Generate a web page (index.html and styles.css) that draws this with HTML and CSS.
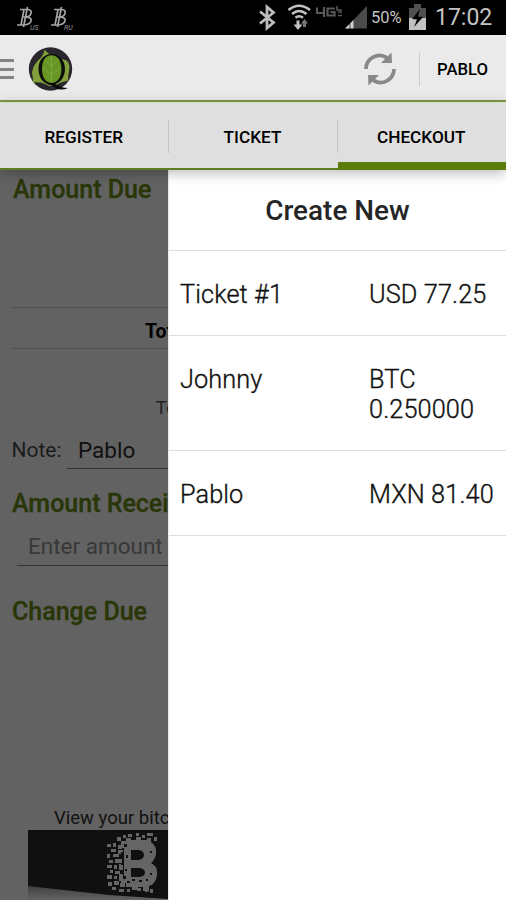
FILE: index.html
```html
<!DOCTYPE html>
<html lang="en">
<head>
<meta charset="utf-8">
<title>Checkout</title>
<link rel="stylesheet" href="styles.css">
</head>
<body>
<div class="screen">
  <header class="status">
    <svg class="coins" width="80" height="35" viewBox="0 0 80 35" fill="none" stroke="#a5a5a5" stroke-width="1.700">
      <g id="coin"><path d="M20 9.500h8q4 .5 3 4t-6 3.500h-2m3 0q6 .5 5 4t-7 4h-7M24 9.500l-3 15.500M27.500 7l-4 20"/></g>
      <use href="#coin" x="34"/>
      <g class="coin-label"><text x="30" y="29.500">US</text><text x="64" y="29.500">RU</text></g>
    </svg>
    <div class="status-right">
      <svg width="112" height="35" viewBox="256 0 112 35">
        <path d="M260 11.500l13.500 11-6.500 5.500V7l6.500 5.500-13.500 11" fill="none" stroke="#bdbdbd" stroke-width="2.800"/>
        <g fill="none" stroke="#c2c2c2" stroke-width="2.500"><path d="M288.500 10q10.500-8.500 21.500 0M292 14q7-6 14.500 0M295.500 17.800q3.500-3 7.500 0"/></g>
        <path d="M296.500 20.500v4h-3l4.500 5.500 4.500-5.500h-3v-4z" fill="#c2c2c2"/><path d="M303 27v-3.500h-2l3.500-4.500 3.500 4.500h-2V27z" fill="#777"/>
        <g fill="none" stroke="#585858" stroke-width="2.200"><path d="M317 7.500V13h7M324 7v10M335 8.500h-7.500V15.500h7V12h-4"/><path d="M337 6v4h5M342 12h-4M342 15.500h-4" stroke-width="1.500"/></g>
        <path d="M345 28.500L367 6v22.500z" fill="#4b4b4b"/><path d="M345 28.500l4.500-4.500v4.500zM350.500 23l3-3v8.500h-3z" fill="#d0d0d0"/>
      </svg>
      <span class="percent">50%</span>
      <svg width="18" height="35" viewBox="0 0 18 35"><path d="M0 8h5V4h7v4h5v11H0z" fill="#505050"/><path d="M0 18h17v12H0z" fill="#c2c2c2"/><path d="M11 9L3 19l5 .5-3 7.500 9-10-5-.5z" fill="#000"/></svg>
      <time class="clock">17:02</time>
    </div>
  </header>
  <nav class="appbar">
    <div class="menu"><i></i><i></i><i></i></div>
    <svg class="logo" width="46" height="46" viewBox="0 0 46 46">
      <circle cx="23.500" cy="23" r="21.700" fill="#29262e"/>
      <path d="M17.500 3.500q4 5 10 7 6 2 12 4 4 3 2.500 11-1 5-1 9-8 2-11 4-6 3-11 0-5-3-13-2 0-5-1-10 1-7 6-12 6-5 6.500-11z" fill="#84a03a"/>
      <ellipse cx="24.500" cy="23" rx="11.500" ry="14.500" fill="#689525"/>
      <path d="M24.500 9v28M24.500 20l-7-6M24.500 20l7-7M24.500 29l-8-7M24.500 29l8-7" stroke="#7dab37" fill="none"/>
      <path fill="#0b0e0a" fill-rule="evenodd" d="M24.500 8C33 8 38 15 38 23s-5 15.500-13.500 15.500S11.500 31 11.500 23 16 8 24.500 8zM24.500 9.300C18 9.300 15 15.500 15 23s3 14 9.500 14S34.500 30.500 34.500 23 31 9.300 24.500 9.300z"/>
      <path d="M20 37q6-1 10 2 4 3 11 3-7 3-12 0-4-3-9-4z" fill="#08080a"/>
    </svg>
    <svg class="refresh" width="34" height="34" viewBox="0 0 34 34"><g id="arc"><path d="M3 17A13.500 13.500 0 0 1 24 5.800" fill="none" stroke="#898989" stroke-width="3.800"/><path d="M28.500 .5l.5 10.500H18z" fill="#898989"/></g><use href="#arc" transform="rotate(180 17 17)"/></svg>
    <span class="user">PABLO</span>
  </nav>
  <nav class="tabs"><a>REGISTER</a><a>TICKET</a><a class="active">CHECKOUT</a></nav>
  <main class="content">
    <section class="checkout">
      <h2 class="due">Amount Due</h2>
      <div class="total">Tot</div>
      <div class="tendered">To</div>
      <div class="note"><span>Note:</span><div class="field">Pablo</div></div>
      <h2 class="received">Amount Recei</h2>
      <div class="field amount">Enter amount</div>
      <h2 class="change">Change Due</h2>
      <p class="view">View your bitc</p>
      <svg class="banner" width="141" height="70" viewBox="28 830 141 70">
        <defs><linearGradient id="shade" x2="0" y2="1"><stop stop-color="#3c3c3c"/><stop offset="1" stop-color="#626262"/></linearGradient></defs>
        <path d="M28 884h141v16H28z" fill="url(#shade)"/>
        <path d="M28 830h141v69l-60-4-81-9z" fill="#101010"/>
        <g fill="#656565">
          <path fill-rule="evenodd" d="M121 841h5v-3h5v2h5v-3h5v3h6v-2h4v4q6 4 5 12-1 6-5 9 7 3 6 12-1 9-8 11v5h-6v-4h-5v3h-6v-3h-6v-4h-5v-4h3v-31h-3zM131 850v10h8q5-1 5-5t-5-5zM131 868v9h9q5-1 5-4.500t-5-4.500z"/>
          <path d="M107 844h4v3h-4zM113 843h3v4h-3zM118 845h4v4h-4zM111 849h5v3h-5zM107 854h3v4h-3zM113 854h6v3h-6zM118 850h5v4h-5zM109 860h4v3h-4zM115 859h7v4h-7zM107 865h5v3h-5zM114 865h3v4h-3zM119 864h4v6h-4zM110 870h3v3h-3zM115 871h5v3h-5zM107 875h5v4h-5zM114 876h3v3h-3zM119 874h4v7h-4zM108 882h4v4h-4zM114 881h5v4h-5zM120 883h5v4h-5zM112 887h4v3h-4zM119 889h5v3h-5zM117 837h4v4h-4zM123 835h3v3h-3zM128 834h4v3h-4zM136 833h3v3h-3zM142 835h3v3h-3zM147 833h6v3h-6zM154 837h3v4h-3zM127 889h3v3h-3zM137 888h4v3h-4zM145 888h3v4h-3zM150 889h3v4h-3z"/>
        </g>
        <path fill="#101010" d="M124 844h3v3h-3zM121 852h2v3h-2zM126 855h2v3h-2zM121 863h3v2h-3zM125 869h2v2h-2zM123 876h3v3h-3zM127 881h3v2h-3zM132 879h3v2h-3zM139 880h3v2h-3zM150 851h2v2h-2zM150 873h2v2h-2zM146 879h2v2h-2z"/>
      </svg>
    </section>
    <aside class="drawer">
      <div class="create">Create New</div>
      <div class="ticket"><span>Ticket #1</span><span>USD 77.25</span></div>
      <div class="ticket two-line"><span>Johnny</span><span>BTC 0.250000</span></div>
      <div class="ticket"><span>Pablo</span><span>MXN 81.40</span></div>
    </aside>
  </main>
</div>
</body>
</html>
```
FILE: styles.css
```css
* { box-sizing: border-box; }
body { margin: 0; font-family: Roboto, sans-serif; color: #111; }
svg { display: block; flex: none; }
.screen { width: 506px; height: 900px; overflow: hidden; display: flex; flex-direction: column; }
.status { height: 35px; flex: none; background: #000; display: flex; justify-content: space-between; }
.coin-label { fill: #999; stroke: none; font: italic 7px Roboto, sans-serif; }
.status-right { display: flex; width: 250px; color: #c4c4c4; }
.percent { width: 41px; padding-left: 3px; font-size: 16.5px; line-height: 36px; }
.clock { padding-left: 8px; font-size: 23px; line-height: 35px; white-space: nowrap; }
.appbar { height: 67px; flex: none; background: #eaeaea; border-bottom: 2px solid #7f9a4d; display: flex; align-items: center; padding-top: 3px; }
.menu { width: 14px; display: grid; gap: 5.5px; }
.menu i { height: 3px; background: #858585; }
.logo { margin-left: 13px; }
.refresh { margin-left: 290px; }
.user { margin-left: 22px; height: 34px; border-left: 1px solid #ccc; padding-left: 17px; line-height: 36px; font-size: 16.7px; font-weight: 500; color: #000; }
.tabs { height: 68px; flex: none; background: #dfdfdf; border-top: 1px solid #d3e0bc; display: grid; grid-template-columns: 168.5px 169px 1fr; position: relative; box-shadow: 0 3px 12px rgba(0,0,0,.28); z-index: 2; }
.tabs a { height: 67px; border-bottom: 2px solid #5f7d27; text-align: center; padding-right: 1px; line-height: 68px; font-size: 17.2px; font-weight: 500; color: #000; background: linear-gradient(#c4c4c4,#c4c4c4) right 17px / 1px 33px no-repeat; }
.tabs .active { border-bottom: 8px solid #5c7b0d; background: none; }
.content { flex: 1; display: flex; min-height: 0; }
.checkout { width: 168px; flex: none; overflow: hidden; background: #626262; padding-left: 12px; white-space: nowrap; display: flex; flex-direction: column; }
.checkout > * { flex: none; }
.checkout h2 { margin: 0; font-size: 25px; line-height: 30px; font-weight: 500; -webkit-text-stroke: .3px #293607; color: #293607; }
.checkout .due { padding-top: 5px; padding-left: 1px; height: 137px; }
.total { height: 42px; border-top: 1px solid #505050; border-bottom: 1px solid #505050; padding-left: 133px; font-size: 19.5px; line-height: 48px; font-weight: 700; color: #000; }
.tendered { height: 85px; padding: 47px 0 0 143.5px; font-size: 19px; line-height: 24px; color: #222; }
.note { display: flex; height: 35px; font-size: 21px; line-height: 32px; }
.note span { width: 55px; margin-left: -.5px; color: #1c1c1c; }
.field { border-bottom: 1px solid #353535; }
.note .field { flex: 1; padding-left: 11.5px; font-size: 22.5px; }
.checkout .received { margin-top: 20px; }
.amount { margin: 10px 0 0 5px; height: 37px; padding-left: 11px; font-size: 22.5px; line-height: 34px; color: #383838; }
.checkout .change { margin-top: 31px; }
.view { margin: 179px 0 0; padding-left: 42px; line-height: 24px; font-size: 18.5px; }
.banner { margin-left: 16px; }
.drawer { flex: 1; background: #fff; border-left: 1px solid #e8e8e8; }
.create { height: 81px; border-bottom: 1px solid #dedede; text-align: center; font-size: 27.9px; font-weight: 500; line-height: 82px; color: #252525; }
.ticket { height: 85px; display: grid; grid-template-columns: 189px 1fr; padding: 29px 0 0 11px; border-bottom: 1px solid #dedede; font-size: 25.3px; letter-spacing: .1px; line-height: 29.5px; font-weight: 300; -webkit-text-stroke: .35px #111; }
.two-line { height: 115px; }
.two-line span:last-child { width: 115px; }
```
